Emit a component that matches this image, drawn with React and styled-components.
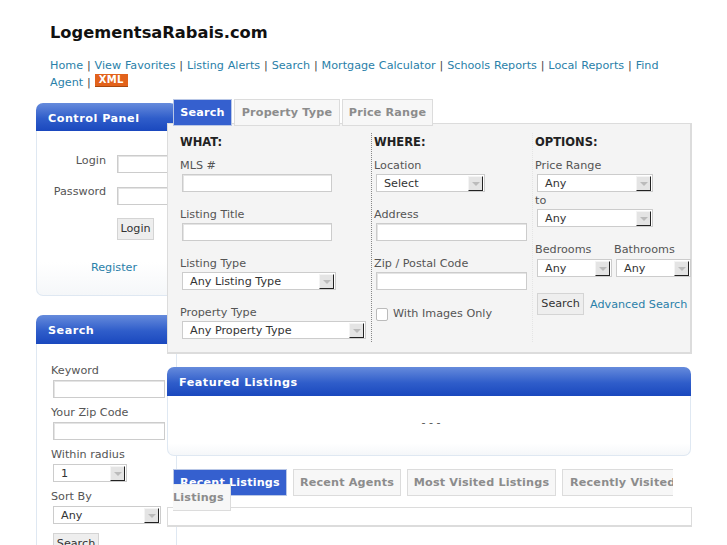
import React from "react";
import styled, { createGlobalStyle } from "styled-components";

const Global = createGlobalStyle`
  html, body { margin: 0; padding: 0; background: #fff; overflow: hidden; height: 545px; }
  body { font-family: "DejaVu Sans", Verdana, sans-serif; font-size: 11.2px; color: #555; }
  * { box-sizing: border-box; }
`;

const Page = styled.div`width: 727px; height: 545px; overflow: hidden;`;
const Header = styled.header`padding: 23px 60px 0 50px; height: 99px;`;
const Logo = styled.h1`margin: 0 0 15px; font-size: 16.3px; line-height: 20px; font-weight: bold; color: #111;`;
const Nav = styled.nav`font-size: 11.2px; line-height: 16px; color: #444; word-spacing: .3px;`;
const Link = styled.a`color: #2a7fa9; text-decoration: none;`;
const XmlBadge = styled.span`
  display: inline-block; width: 33px; height: 13px; background: #e2621b;
  border-bottom: 1px solid #a8480f; color: #fff; font: bold 10px/11px "DejaVu Sans", sans-serif;
  text-align: center; vertical-align: 3px; letter-spacing: .3px;
`;
const Columns = styled.div`display: flex; align-items: flex-start; padding-left: 36px;`;
const Sidebar = styled.aside`width: 141px; flex: none; padding-top: 4px;`;
const Main = styled.main`width: 525px; flex: none; margin-left: -10px; position: relative; z-index: 2;`;

const Panel = styled.section`margin-bottom: ${p => p.$mb || 0}px; margin-right: ${p => p.$mr || 0}px; padding-top: ${p => p.$pt || 0}px;`;
const PanelHead = styled.h2`
  margin: 0; height: ${p => p.$h || 29}px; padding-left: 12px; border-radius: 7px 7px 0 0;
  background: linear-gradient(#668bdc, #2f5dca 55%, #1a48be); color: #fff;
  font-size: 11.2px; line-height: ${p => p.$lh || 32}px; font-weight: bold; letter-spacing: .5px;
`;
const PanelBody = styled.div`
  height: ${p => p.$h}px; border: 1px solid #dfe8f2; border-top: 0; border-radius: ${p => p.$open ? "0" : "0 0 7px 7px"};
  background: ${p => p.$open ? "#fff" : "linear-gradient(#fff 80%, #f5f7f9)"};
  ${p => p.$open && "border-bottom: 0;"}
  padding: ${p => p.$pad || "0"};
`;
const LoginRow = styled.div`display: flex; height: 32px; align-items: flex-start;`;
const LoginLabel = styled.label`width: 69px; flex: none; margin-right: 9px; text-align: right; line-height: 16px; margin-top: ${p => p.$mt}px;`;
const Field = styled.div`
  width: ${p => p.$w}px; height: 18px; margin: ${p => p.$m || "0 0 0 2px"}; background: #fff; border: 1px solid #ccc;
  box-shadow: inset 1px 1px 0 #e4e4e4; flex: none;
`;
const Button = styled.button`
  display: block; width: ${p => p.$w}px; height: 22px; padding: 0; border: 1px solid #d4d4d4; background: #eee;
  font: 11.2px/18px "DejaVu Sans", sans-serif; color: #333; margin: ${p => p.$m || 0}; flex: none;
`;
const Register = styled.div`text-align: center; margin: 20px 0 0 15px; line-height: 16px;`;

const Tabs = styled.div`display: flex; height: 24px; padding-left: 6px; gap: ${p => p.$gap || 2}px; position: relative; z-index: 2; width: ${p => p.$w || 525}px;`;
const Tab = styled.div`
  height: 27px; flex: none; width: ${p => p.$w}px; white-space: nowrap; overflow: hidden;
  font-size: 11.2px; font-weight: bold; line-height: 26px; text-align: ${p => p.$clip ? "left" : "center"};
  letter-spacing: .18px; padding-left: ${p => p.$clip ? 7 : 0}px;
  color: ${p => p.$active ? "#fff" : "#8c8c8c"};
  background: ${p => p.$active ? "#3560cf" : "#f7f7f7"};
  border: 1px solid ${p => p.$active ? "#b9c7e6" : "#dcdcdc"};
  ${p => p.$clip && "border-right: 0;"}
`;
const WrappedTab = styled.div`
  position: absolute; left: 6px; top: 15px; width: 58px; height: 27px; background: #f7f7f7; color: #8c8c8c;
  border: 1px solid #dcdcdc; border-left: 0; border-top-color: #eee; font-size: 11.2px; font-weight: bold; line-height: 25px; letter-spacing: .18px; z-index: 3;
`;
const SearchBox = styled.div`
  height: 231px; width: 525px; background: #f4f4f4; border: 2px solid #dcdcdc; border-left-width: 1px; border-top-width: 1px;
  display: grid; grid-template-columns: 204px 161px 1fr; padding: 9px 0 0 0;
`;
const Col = styled.div`
  position: relative; height: 209px; padding-left: ${p => p.$pl}px;
  ${p => p.$rule && `border-right: 1px dotted ${p.$rule};`}
`;
const ColTitle = styled.h3`margin: 0 0 7px; font-size: 11.5px; line-height: 19px; font-weight: bold; color: #222; height: 17px;`;
const Label = styled.label`display: block; font-size: 11.2px; line-height: 17px; height: ${p => p.$h || 16}px; margin-top: ${p => p.$mt || 0}px;`;
const SelectBox = styled.div`
  position: relative; width: ${p => p.$w}px; height: 18px; margin-left: 2px; background: #fff; border: 1px solid #ccc;
  padding-left: 7px; font-size: 11.2px; line-height: 17px; color: #333; flex: none; white-space: nowrap; z-index: 1;
`;
const Arrow = styled.span`
  position: absolute; right: 1px; top: 1px; width: 15px; height: 15px; background: #e4e4e4;
  border: 1px solid; border-color: #f4f4f4 #222 #222 #f4f4f4;
  &::after { content: ""; position: absolute; left: 3px; top: 5px; border: 4px solid transparent; border-top: 4px solid #bbb; border-bottom: 0; }
`;
const Select = ({ w, children }) => <SelectBox $w={w}>{children}<Arrow /></SelectBox>;
const Check = styled.div`display: flex; align-items: center; gap: 5px; margin: 16px 0 0 2px; line-height: 16px;`;
const Box = styled.span`width: 12px; height: 13px; background: #fff; border: 1px solid #bbb; border-radius: 2px;`;
const TwoUp = styled.div`display: flex;`;
const Half = styled.div`width: 79px; flex: none;`;
const Actions = styled.div`display: flex; align-items: center; margin-top: 16px; margin-left: 2px; gap: 6px; white-space: nowrap;`;
const Dots = styled.div`text-align: center; line-height: 16px; padding-top: 19px; padding-left: 4px;`;
const ResultBox = styled.div`height: 20px; width: 525px; background: #fff; border: 1px solid #dcdcdc; border-bottom-width: 2px; margin-top: 14px;`;

const navItems = ["Home", "View Favorites", "Listing Alerts", "Search", "Mortgage Calculator", "Schools Reports", "Local Reports", "Find Agent"];

export default function App() {
  return (
    <Page>
      <Global />
      <Header>
        <Logo>LogementsaRabais.com</Logo>
        <Nav>
          {navItems.map(n => <React.Fragment key={n}><Link href="#">{n}</Link> | </React.Fragment>)}
          <XmlBadge>XML</XmlBadge>
        </Nav>
      </Header>
      <Columns>
        <Sidebar>
          <Panel $mb={19}>
            <PanelHead $h={28} $lh={31}>Control Panel</PanelHead>
            <PanelBody $h={165} $pad="24px 0 0">
              <LoginRow><LoginLabel $mt={-2}>Login</LoginLabel><Field $w={60} /></LoginRow>
              <LoginRow><LoginLabel $mt={-3}>Password</LoginLabel><Field $w={60} /></LoginRow>
              <Button $w={37} $m="-1px 0 0 80px">Login</Button>
              <Register><Link href="#">Register</Link></Register>
            </PanelBody>
          </Panel>
          <Panel>
            <PanelHead>Search</PanelHead>
            <PanelBody $open $h={202} $pad="18px 0 0 14px">
              <Label $h={18}>Keyword</Label>
              <Field $w={112} $m="0 0 0 2px" />
              <Label $mt={6} $h={18}>Your Zip Code</Label>
              <Field $w={112} />
              <Label $mt={6} $h={18}>Within radius</Label>
              <Select w={74}>1</Select>
              <Label $mt={6} $h={18}>Sort By</Label>
              <Select w={108}>Any</Select>
              <Button $w={46} $m="9px 0 0 2px">Search</Button>
            </PanelBody>
          </Panel>
        </Sidebar>
        <Main>
          <Tabs>
            <Tab $active $w={59}>Search</Tab>
            <Tab $w={106}>Property Type</Tab>
            <Tab $w={91}>Price Range</Tab>
          </Tabs>
          <SearchBox>
            <Col $pl={12} $rule="#888">
              <ColTitle>WHAT:</ColTitle>
              <Label $h={17}>MLS #</Label>
              <Field $w={150} $m="0 0 0 2px" />
              <Label $mt={14} $h={17}>Listing Title</Label>
              <Field $w={150} />
              <Label $mt={14} $h={17}>Listing Type</Label>
              <Select w={154}>Any Listing Type</Select>
              <Label $mt={14} $h={17}>Property Type</Label>
              <Select w={184}>Any Property Type</Select>
            </Col>
            <Col $pl={2} $rule="#e4e4e4">
              <ColTitle>WHERE:</ColTitle>
              <Label $h={17}>Location</Label>
              <Select w={109}>Select</Select>
              <Label $mt={14} $h={17}>Address</Label>
              <Field $w={151} />
              <Label $mt={14} $h={17}>Zip / Postal Code</Label>
              <Field $w={151} />
              <Check><Box />With Images Only</Check>
            </Col>
            <Col $pl={2}>
              <ColTitle>OPTIONS:</ColTitle>
              <Label $h={17}>Price Range</Label>
              <Select w={116}>Any</Select>
              <Label $h={17}>to</Label>
              <Select w={116}>Any</Select>
              <TwoUp>
                <Half><Label $mt={14} $h={18}>Bedrooms</Label><Select w={75}>Any</Select></Half>
                <Half><Label $mt={14} $h={18}>Bathrooms</Label><Select w={75}>Any</Select></Half>
              </TwoUp>
              <Actions><Button $w={47}>Search</Button><Link href="#">Advanced Search</Link></Actions>
            </Col>
          </SearchBox>
          <Panel $mb={13} $mr={1} $pt={13}>
            <PanelHead>Featured Listings</PanelHead>
            <PanelBody $h={60}><Dots>- - -</Dots></PanelBody>
          </Panel>
          <Tabs $gap={6} $w={507}>
            <Tab $active $w={114}>Recent Listings</Tab>
            <Tab $w={108}>Recent Agents</Tab>
            <Tab $w={149}>Most Visited Listings</Tab>
            <Tab $w={111} $clip>Recently Visited</Tab>
            <WrappedTab>Listings</WrappedTab>
          </Tabs>
          <ResultBox />
        </Main>
      </Columns>
    </Page>
  );
}
